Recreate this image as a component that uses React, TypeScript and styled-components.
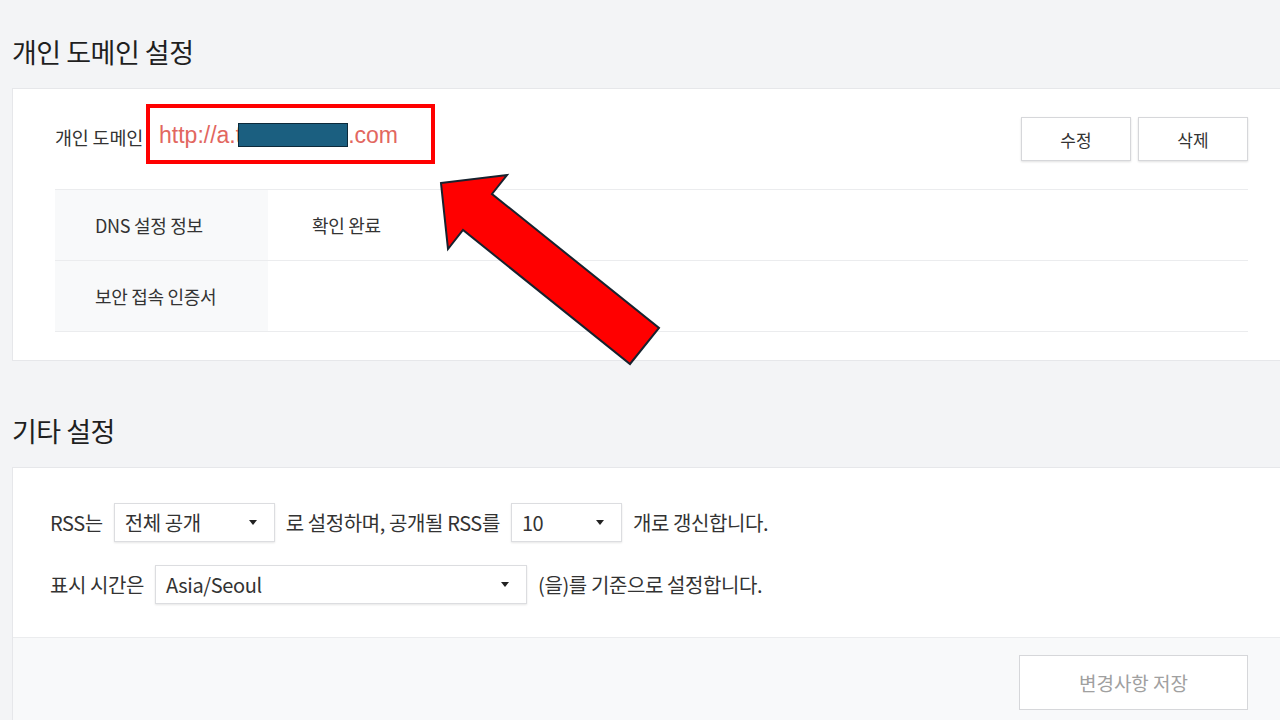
import React from "react";
import styled, { createGlobalStyle } from "styled-components";

const GlobalStyle = createGlobalStyle`
  html, body {
    margin: 0;
    padding: 0;
    background: #f3f4f6;
  }
  body {
    font-family: "Noto Sans CJK KR", "Noto Sans", "Liberation Sans", sans-serif;
    color: #333;
  }
  * {
    box-sizing: border-box;
  }
`;

const Page = styled.div`
  position: relative;
  width: 1280px;
  height: 720px;
  overflow: hidden;
  background: #f3f4f6;
  padding: 32px 0 0 12px;
`;

const SectionTitle = styled.h2<{ $top?: number }>`
  margin: ${(p) => p.$top ?? 0}px 0 17px;
  font-size: 27px;
  line-height: 39px;
  font-weight: 400;
  color: #1f1f1f;
  letter-spacing: -0.5px;
`;

const Card = styled.section`
  background: #fff;
  border: 1px solid #e6e7ea;
  margin-right: -4px;
`;

const DomainBody = styled.div`
  padding: 15px 35px 28px 42px;
`;

const DomainRow = styled.div`
  display: flex;
  align-items: center;
  height: 60px;
  margin-bottom: 25px;
`;

const FieldLabel = styled.span`
  font-size: 18.5px;
  color: #333;
  margin: 6px 3px 0 0;
  letter-spacing: -0.2px;
`;

const Highlight = styled.div`
  display: flex;
  align-items: center;
  width: 289px;
  height: 60px;
  border: 4px solid #ff0000;
  padding-left: 9px;
`;

const DomainUrl = styled.span`
  font-family: "Liberation Sans", Arial, sans-serif;
  font-size: 23px;
  color: #e2675f;
  display: inline-flex;
  align-items: center;
  margin-top: 2px;
`;

const Redacted = styled.span`
  display: inline-block;
  width: 110px;
  height: 24px;
  margin-left: -4px;
  background: #1b5f80;
  border: 1px solid #0d2a3a;
`;

const ButtonGroup = styled.div`
  margin: 10px 0 0 auto;
  display: flex;
  gap: 7px;
`;

const Button = styled.button<{ $width?: number; $height?: number; $muted?: boolean }>`
  width: ${(p) => p.$width ?? 110}px;
  height: ${(p) => p.$height ?? 44}px;
  background: #fff;
  border: 1px solid #d6d7da;
  box-shadow: ${(p) => (p.$muted ? "none" : "0 1px 2px rgba(0, 0, 0, 0.12)")};
  font-family: inherit;
  font-size: ${(p) => (p.$muted ? 19 : 17)}px;
  color: ${(p) => (p.$muted ? "#a0a0a0" : "#333")};
  padding: 0;
  cursor: pointer;
`;

const InfoTable = styled.div`
  border-top: 1px solid #ebecee;
`;

const InfoRow = styled.div`
  display: grid;
  grid-template-columns: 213px 1fr;
  height: 71px;
  border-bottom: 1px solid #ebecee;
`;

const InfoHead = styled.div`
  background: #f8f9fa;
  display: flex;
  align-items: center;
  padding-left: 40px;
  font-size: 18px;
  color: #333;
  letter-spacing: -0.3px;
`;

const InfoValue = styled.div`
  display: flex;
  align-items: center;
  padding-left: 44px;
  font-size: 18px;
  color: #333;
  letter-spacing: -0.3px;
`;

const EtcBody = styled.div`
  padding: 35px 0 33px 37px;
  display: flex;
  flex-direction: column;
  gap: 23px;
`;

const SentenceRow = styled.div`
  display: flex;
  align-items: center;
  gap: 11px;
  font-size: 20px;
  color: #333;
  letter-spacing: -0.4px;
`;

const Select = styled.div<{ $width: number }>`
  width: ${(p) => p.$width}px;
  height: 39px;
  border: 1px solid #dcdde0;
  box-shadow: 0 1px 2px rgba(0, 0, 0, 0.1);
  display: flex;
  align-items: center;
  justify-content: space-between;
  padding: 0 17px 0 10px;
  font-size: 20px;
  color: #333;
  background: #fff;
`;

const Caret = styled.span`
  width: 0;
  height: 0;
  border-left: 4px solid transparent;
  border-right: 4px solid transparent;
  border-top: 5px solid #222;
`;

const Footer = styled.div`
  background: #f8f9fa;
  border-top: 1px solid #ebecee;
  padding: 17px 35px 40px 0;
  display: flex;
  justify-content: flex-end;
`;

const ArrowLayer = styled.svg`
  position: absolute;
  left: 0;
  top: 0;
  pointer-events: none;
`;

const App: React.FC = () => {
  return (
    <>
      <GlobalStyle />
      <Page>
        <SectionTitle>개인 도메인 설정</SectionTitle>
        <Card>
          <DomainBody>
            <DomainRow>
              <FieldLabel>개인 도메인</FieldLabel>
              <Highlight>
                <DomainUrl>
                  http://a.t
                  <Redacted />
                  .com
                </DomainUrl>
              </Highlight>
              <ButtonGroup>
                <Button>수정</Button>
                <Button>삭제</Button>
              </ButtonGroup>
            </DomainRow>
            <InfoTable>
              <InfoRow>
                <InfoHead>DNS 설정 정보</InfoHead>
                <InfoValue>확인 완료</InfoValue>
              </InfoRow>
              <InfoRow>
                <InfoHead>보안 접속 인증서</InfoHead>
                <InfoValue />
              </InfoRow>
            </InfoTable>
          </DomainBody>
        </Card>

        <SectionTitle $top={50}>기타 설정</SectionTitle>
        <Card>
          <EtcBody>
            <SentenceRow>
              RSS는
              <Select $width={161}>
                전체 공개
                <Caret />
              </Select>
              로 설정하며, 공개될 RSS를
              <Select $width={111}>
                10
                <Caret />
              </Select>
              개로 갱신합니다.
            </SentenceRow>
            <SentenceRow>
              표시 시간은
              <Select $width={372}>
                Asia/Seoul
                <Caret />
              </Select>
              (을)를 기준으로 설정합니다.
            </SentenceRow>
          </EtcBody>
          <Footer>
            <Button $width={229} $height={55} $muted>
              변경사항 저장
            </Button>
          </Footer>
        </Card>

        <ArrowLayer width="1280" height="720" viewBox="0 0 1280 720">
          <polygon
            points="441,183 507,175 492,194 659,328 630,364 463,230 448,249"
            fill="#ff0000"
            stroke="#17222e"
            strokeWidth="2"
            strokeLinejoin="miter"
          />
        </ArrowLayer>
      </Page>
    </>
  );
};

export default App;
